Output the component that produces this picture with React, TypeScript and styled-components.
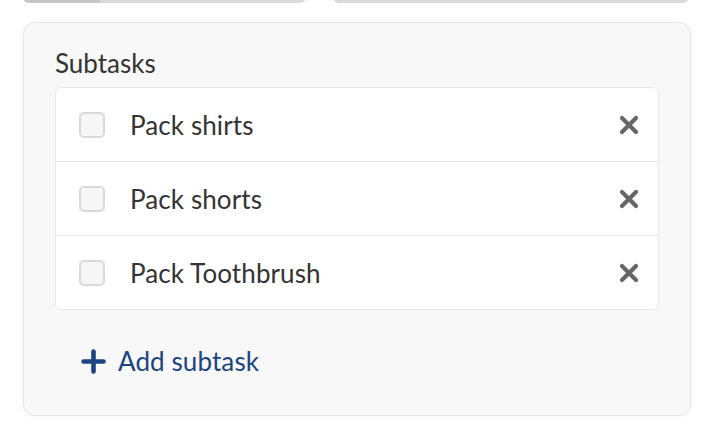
import React from "react";
import styled, { createGlobalStyle } from "styled-components";

const Global = createGlobalStyle`
  html, body { margin: 0; padding: 0; background: #ffffff; }
  body { font-family: Lato, "Open Sans", sans-serif; color: #333333; }
  * { box-sizing: border-box; }
`;

const Page = styled.div`
  width: 718px;
  height: 436px;
  padding: 0 27px 0 23px;
  overflow: hidden;
`;

const TopRow = styled.div`
  height: 3px;
  display: flex;
  align-items: flex-end;
  gap: 27px;
  overflow: hidden;
`;

const FieldStub = styled.div<{ $w: number; $fill?: number }>`
  width: ${(p) => p.$w}px;
  height: 30px;
  flex: none;
  border-radius: 6px;
  background: linear-gradient(
    to right,
    #c6c6c6 0,
    #c6c6c6 ${(p) => p.$fill ?? 0}px,
    #dadada ${(p) => p.$fill ?? 0}px
  );
`;

const Card = styled.section`
  margin-top: 19px;
  width: 668px;
  background: #f8f8f8;
  border: 1px solid #e6e6e6;
  border-radius: 12px;
  box-shadow: 0 0 8px rgba(0, 0, 0, 0.04);
  padding: 23px 31px 38px 31px;
`;

const Title = styled.h3`
  margin: 0 0 7px 0;
  font-size: 26px;
  font-weight: 400;
  line-height: 34px;
  color: #333333;
`;

const List = styled.ul`
  list-style: none;
  margin: 0;
  padding: 0;
  background: #ffffff;
  border: 1px solid #e8e8e8;
  border-radius: 6px;
`;

const Row = styled.li`
  height: 73px;
  display: flex;
  align-items: center;
  padding: 0 19px 0 23px;
  & + & {
    height: 74px;
    border-top: 1px solid #e8e8e8;
  }
`;

const Check = styled.span`
  width: 26px;
  height: 26px;
  flex: none;
  border: 2px solid #d9d9d9;
  border-radius: 5px;
  background: #f6f6f6;
`;

const Label = styled.span`
  flex: 1;
  margin-left: 25px;
  font-size: 26px;
  line-height: 32px;
  letter-spacing: 0.1px;
  color: #333333;
`;

const Remove = styled.button`
  border: 0;
  padding: 0;
  background: none;
  width: 20px;
  height: 20px;
  display: flex;
  align-items: center;
  justify-content: center;
  cursor: pointer;
`;

const AddButton = styled.button`
  margin-top: 35px;
  margin-left: 26px;
  border: 0;
  padding: 0;
  background: none;
  display: flex;
  align-items: center;
  gap: 12px;
  font-family: inherit;
  font-size: 26px;
  line-height: 32px;
  letter-spacing: 0.1px;
  color: #1b4482;
  cursor: pointer;
`;

const XIcon = () => (
  <svg width="20" height="20" viewBox="0 0 20 20">
    <path d="M3 3 L17 17 M17 3 L3 17" stroke="#666666" strokeWidth="4.2" strokeLinecap="round" />
  </svg>
);

const PlusIcon = () => (
  <svg width="25" height="25" viewBox="0 0 25 25">
    <path d="M12.5 2.5 V22.5 M2.5 12.5 H22.5" stroke="#1b4482" strokeWidth="4.6" strokeLinecap="round" />
  </svg>
);

const items = ["Pack shirts", "Pack shorts", "Pack Toothbrush"];

export default function App() {
  return (
    <>
      <Global />
      <Page>
        <TopRow>
          <FieldStub $w={283} $fill={77} />
          <FieldStub $w={356} />
        </TopRow>
        <Card>
          <Title>Subtasks</Title>
          <List>
            {items.map((t) => (
              <Row key={t}>
                <Check />
                <Label>{t}</Label>
                <Remove aria-label="Remove">
                  <XIcon />
                </Remove>
              </Row>
            ))}
          </List>
          <AddButton>
            <PlusIcon />
            Add subtask
          </AddButton>
        </Card>
      </Page>
    </>
  );
}
